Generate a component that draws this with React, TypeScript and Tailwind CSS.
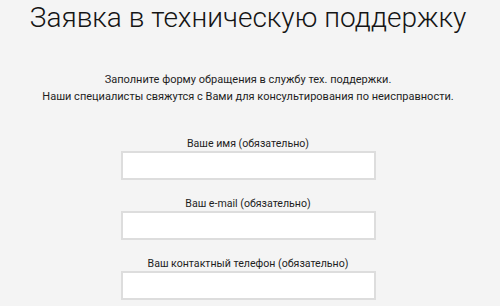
import React from "react";

const fields = [
  "Ваше имя (обязательно)",
  "Ваш e-mail (обязательно)",
  "Ваш контактный телефон (обязательно)",
];

export default function App() {
  return (
    <div
      className="min-h-[306px] w-full bg-[#f4f4f4] text-[#1e1e1e] pr-[4px]"
      style={{ fontFamily: "Roboto, 'Noto Sans', sans-serif" }}
    >
      <h1 className="text-center text-[28px] font-light leading-[36px] text-[#151515]">
        Заявка в техническую поддержку
      </h1>

      <p className="mt-[35px] text-center text-[11px] leading-[17px]">
        Заполните форму обращения в службу тех. поддержки.
        <br />
        Наши специалисты свяжутся с Вами для консультирования по неисправности.
      </p>

      {/* Form fields */}
      <div className="mt-[31px] flex flex-col items-center gap-[16px]">
        {fields.map((label) => (
          <div key={label} className="flex flex-col items-center">
            <label className="text-[10.6px] leading-[15px]">{label}</label>
            <input
              type="text"
              className="h-[29px] w-[255px] border-2 border-[#dddddd] bg-white outline-none"
            />
          </div>
        ))}
      </div>
    </div>
  );
}
